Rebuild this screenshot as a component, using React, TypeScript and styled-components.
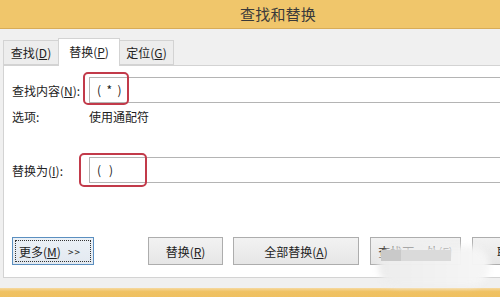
import React from "react";
import styled, { createGlobalStyle } from "styled-components";

const Global = createGlobalStyle`
  html, body { margin: 0; padding: 0; }
  body {
    width: 500px; height: 297px; overflow: hidden; background: #f0f0f0;
    font-family: "Noto Sans CJK SC", "Liberation Sans", sans-serif;
  }
`;

const Window = styled.div`
  position: relative;
  display: flex;
  flex-direction: column;
  width: 500px;
  height: 297px;
  overflow: hidden;
`;

const TitleBar = styled.div`
  height: 28px;
  flex: none;
  background: #f0c66b;
  border-bottom: 1px solid #d8ac58;
  padding-left: 240px;
  font-size: 15px;
  line-height: 28px;
  color: #3a3a3a;
  letter-spacing: 0.2px;
`;

const Body = styled.div`
  flex: 1;
  background: #f0f0f0;
  padding: 9px 0 10px 3px;
  display: flex;
  flex-direction: column;
  min-height: 0;
`;

const Tabs = styled.div`
  display: flex;
  align-items: flex-end;
  height: 27px;
  flex: none;
  position: relative;
  z-index: 1;
`;

const Tab = styled.div<{ $active?: boolean; $w: number }>`
  box-sizing: border-box;
  width: ${(p) => p.$w}px;
  height: ${(p) => (p.$active ? 28 : 25)}px;
  margin-bottom: ${(p) => (p.$active ? -1 : 0)}px;
  background: ${(p) => (p.$active ? "#ffffff" : "#ededed")};
  border: 1px solid #d3d3d3;
  border-bottom: ${(p) => (p.$active ? "none" : "1px solid #d3d3d3")};
  margin-left: ${(p) => (p.$active ? -1 : 0)}px;
  margin-right: ${(p) => (p.$active ? -1 : 0)}px;
  position: relative;
  z-index: ${(p) => (p.$active ? 2 : 1)};
  font-size: 12px;
  color: #222;
  display: flex;
  align-items: center;
  justify-content: center;
  padding-bottom: ${(p) => (p.$active ? 2 : 0)}px;
`;

const Panel = styled.div`
  box-sizing: border-box;
  flex: 1;
  width: 540px;
  background: #ffffff;
  border: 1px solid #d3d3d3;
  padding: 11px 0 0 8px;
  display: flex;
  flex-direction: column;
`;

const Row = styled.div<{ $mt?: number }>`
  display: flex;
  align-items: center;
  margin-top: ${(p) => p.$mt ?? 0}px;
  font-size: 12px;
  color: #222;
`;

const Label = styled.div`
  width: 77px;
  flex: none;
`;

const InputWrap = styled.div`
  position: relative;
  flex: 1;
`;

const Input = styled.div`
  box-sizing: border-box;
  height: 26px;
  background: #fff;
  border: 1px solid #b4b4b4;
  border-right: none;
  padding-left: 7px;
  font-size: 12px;
  line-height: 24px;
  color: #222;
  white-space: pre;
`;

const Mark = styled.div<{ $l: number; $t: number; $w: number; $h: number }>`
  position: absolute;
  left: ${(p) => p.$l}px;
  top: ${(p) => p.$t}px;
  width: ${(p) => p.$w}px;
  height: ${(p) => p.$h}px;
  box-sizing: border-box;
  border: 2px solid #c23a4a;
  border-radius: 5px;
`;

const Buttons = styled.div`
  display: flex;
  margin-top: auto;
  margin-bottom: 12px;
  margin-left: 0;
`;

const Button = styled.div<{ $w: number; $ml?: number; $focus?: boolean }>`
  box-sizing: border-box;
  position: relative;
  width: ${(p) => p.$w}px;
  flex: none;
  height: 28px;
  margin-left: ${(p) => p.$ml ?? 0}px;
  border: 1px solid ${(p) => (p.$focus ? "#5b8fc0" : "#adadad")};
  background: ${(p) =>
    p.$focus ? "linear-gradient(#ebf1f7, #e3e9f0)" : "linear-gradient(#f2f2f2, #e6e6e6)"};
  font-size: 12px;
  color: #222;
  display: flex;
  align-items: center;
  justify-content: ${(p) => (p.$focus ? "flex-start" : "center")};
  padding-left: ${(p) => (p.$focus ? 6 : 0)}px;
  white-space: nowrap;
  overflow: hidden;
`;

const FocusRing = styled.div`
  position: absolute;
  inset: 2px;
  border: 1px dotted #333;
  pointer-events: none;
`;

const Arrows = styled.span`
  margin-left: 7px;
  font-size: 10px;
  letter-spacing: 1px;
`;

const Footer = styled.div`
  height: 9px;
  flex: none;
  background: linear-gradient(#f6d9a0, #f0c263 40%, #efc060);
`;

const Smudge = styled.div`
  position: absolute;
  left: 378px;
  top: 246px;
  width: 112px;
  height: 40px;
  border-radius: 22px;
  background: linear-gradient(90deg, rgba(236,236,236,0.97), rgba(246,246,246,0.97));
  filter: blur(3px);
`;

const SmudgeBar = styled.div`
  position: absolute;
  left: 381px;
  top: 250px;
  width: 70px;
  height: 11px;
  background: linear-gradient(90deg, #c9c9c9 0 20px, #dadada 20px);
  filter: blur(0.6px);
`;

export default function App() {
  return (
    <>
      <Global />
      <Window>
        <TitleBar>查找和替换</TitleBar>
        <Body>
          <Tabs>
            <Tab $w={56}>查找(<u>D</u>)</Tab>
            <Tab $w={62} $active>替换(<u>P</u>)</Tab>
            <Tab $w={55}>定位(<u>G</u>)</Tab>
          </Tabs>
          <Panel>
            <Row>
              <Label>查找内容(<u>N</u>):</Label>
              <InputWrap>
                <Input>{"(  *  )"}</Input>
                <Mark $l={-6} $t={-5} $w={46} $h={33} />
              </InputWrap>
            </Row>
            <Row $mt={5}>
              <Label>选项:</Label>
              <div>使用通配符</div>
            </Row>
            <Row $mt={32}>
              <Label>替换为(<u>I</u>):</Label>
              <InputWrap>
                <Input>{"(   )"}</Input>
                <Mark $l={-10} $t={-4} $w={68} $h={34} />
              </InputWrap>
            </Row>
            <Buttons>
              <Button $w={82} $focus>
                <FocusRing />
                更多(<u>M</u>)<Arrows>&gt;&gt;</Arrows>
              </Button>
              <Button $w={75} $ml={54}>替换(<u>R</u>)</Button>
              <Button $w={126} $ml={10}>全部替换(<u>A</u>)</Button>
              <Button $w={91} $ml={11}>查找下一处(<u>F</u>)</Button>
              <Button $w={74} $ml={11}>取消</Button>
            </Buttons>
          </Panel>
        </Body>
        <Footer />
        <Smudge />
        <SmudgeBar />
      </Window>
    </>
  );
}
